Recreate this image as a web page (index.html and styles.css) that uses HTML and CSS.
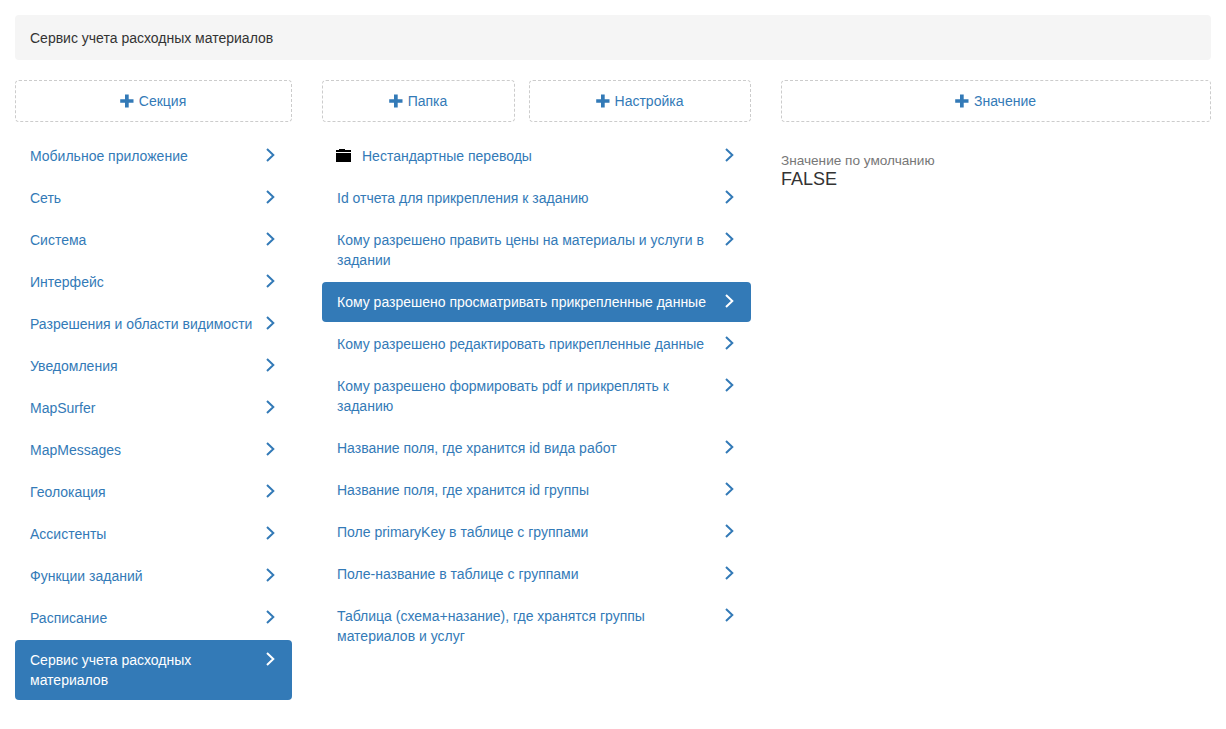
FILE: index.html
```html
<!DOCTYPE html>
<html lang="ru">
<head>
<meta charset="utf-8">
<title>Сервис учета расходных материалов</title>
<link rel="stylesheet" href="styles.css">
</head>
<body>
<svg class="defs" width="0" height="0" aria-hidden="true">
  <symbol id="plus" viewBox="0 0 14 14"><path d="M5 .5h3.700v4.700h4.800v3.600H8.700v4.700H5V8.800H.2V5.200H5z"/></symbol>
  <symbol id="chev" viewBox="0 0 9 14"><path d="M1 1l6.300 6L1 13" fill="none" stroke="currentColor" stroke-width="2"/></symbol>
</svg>
<div class="crumb">Сервис учета расходных материалов</div>
<main class="cols">
  <section>
    <div class="actions">
      <a class="add"><svg class="plus"><use href="#plus"/></svg>Секция</a>
    </div>
    <ul class="list">
      <li class="item"><span class="label">Мобильное приложение</span><svg class="chev"><use href="#chev"/></svg></li>
      <li class="item"><span class="label">Сеть</span><svg class="chev"><use href="#chev"/></svg></li>
      <li class="item"><span class="label">Система</span><svg class="chev"><use href="#chev"/></svg></li>
      <li class="item"><span class="label">Интерфейс</span><svg class="chev"><use href="#chev"/></svg></li>
      <li class="item"><span class="label">Разрешения и области видимости</span><svg class="chev"><use href="#chev"/></svg></li>
      <li class="item"><span class="label">Уведомления</span><svg class="chev"><use href="#chev"/></svg></li>
      <li class="item"><span class="label">MapSurfer</span><svg class="chev"><use href="#chev"/></svg></li>
      <li class="item"><span class="label">MapMessages</span><svg class="chev"><use href="#chev"/></svg></li>
      <li class="item"><span class="label">Геолокация</span><svg class="chev"><use href="#chev"/></svg></li>
      <li class="item"><span class="label">Ассистенты</span><svg class="chev"><use href="#chev"/></svg></li>
      <li class="item"><span class="label">Функции заданий</span><svg class="chev"><use href="#chev"/></svg></li>
      <li class="item"><span class="label">Расписание</span><svg class="chev"><use href="#chev"/></svg></li>
      <li class="item active"><span class="label">Сервис учета расходных материалов</span><svg class="chev"><use href="#chev"/></svg></li>
    </ul>
  </section>
  <section>
    <div class="actions actions-two">
      <a class="add"><svg class="plus"><use href="#plus"/></svg>Папка</a>
      <a class="add"><svg class="plus"><use href="#plus"/></svg>Настройка</a>
    </div>
    <ul class="list">
      <li class="item"><svg class="folder" viewBox="0 0 15 13"><path d="M3 0h6v1h6v2H0V1h3zM0 4h15v9H0z"/></svg><span class="label">Нестандартные переводы</span><svg class="chev"><use href="#chev"/></svg></li>
      <li class="item"><span class="label">Id отчета для прикрепления к заданию</span><svg class="chev"><use href="#chev"/></svg></li>
      <li class="item"><span class="label">Кому разрешено править цены на материалы и услуги в задании</span><svg class="chev"><use href="#chev"/></svg></li>
      <li class="item active"><span class="label">Кому разрешено просматривать прикрепленные данные</span><svg class="chev"><use href="#chev"/></svg></li>
      <li class="item"><span class="label">Кому разрешено редактировать прикрепленные данные</span><svg class="chev"><use href="#chev"/></svg></li>
      <li class="item"><span class="label">Кому разрешено формировать pdf и прикреплять к заданию</span><svg class="chev"><use href="#chev"/></svg></li>
      <li class="item"><span class="label">Название поля, где хранится id вида работ</span><svg class="chev"><use href="#chev"/></svg></li>
      <li class="item"><span class="label">Название поля, где хранится id группы</span><svg class="chev"><use href="#chev"/></svg></li>
      <li class="item"><span class="label">Поле primaryKey в таблице с группами</span><svg class="chev"><use href="#chev"/></svg></li>
      <li class="item"><span class="label">Поле-название в таблице с группами</span><svg class="chev"><use href="#chev"/></svg></li>
      <li class="item"><span class="label">Таблица (схема+назание), где хранятся группы материалов и услуг</span><svg class="chev"><use href="#chev"/></svg></li>
    </ul>
  </section>
  <section>
    <div class="actions">
      <a class="add"><svg class="plus"><use href="#plus"/></svg>Значение</a>
    </div>
    <div class="value">
      <div class="value-label">Значение по умолчанию</div>
      <div class="value-text">FALSE</div>
    </div>
  </section>
</main>
</body>
</html>
```
FILE: styles.css
```css
* { box-sizing: border-box; }
html, body { margin: 0; background: #fff; }
body {
  padding: 15px;
  font: 14px/20px "Liberation Sans", Arial, sans-serif;
  color: #333;
}
.defs { position: absolute; }
.crumb {
  height: 45px;
  padding: 13px 15px 12px;
  background: #f5f5f5;
  border-radius: 4px;
  margin-bottom: 20px;
}
.cols {
  display: grid;
  grid-template-columns: 277px 429px 430px;
  gap: 30px;
}
.actions { display: grid; margin-bottom: 14px; }
.actions-two { grid-template-columns: 193px 222px; gap: 14px; }
.add {
  display: flex;
  align-items: center;
  justify-content: center;
  height: 42px;
  border: 1px dashed #ccc;
  border-radius: 4px;
  color: #337ab7;
}
.plus { width: 14px; height: 14px; margin: 0 5px 0 -1px; fill: #337ab7; }
.list { list-style: none; margin: 0; padding: 0; display: flex; flex-direction: column; gap: 2px; }
.item {
  display: flex;
  align-items: flex-start;
  padding: 10px 17px 10px 15px;
  border-radius: 4px;
  color: #337ab7;
}
.item.active { background: #337ab7; color: #fff; }
.label { flex: 1; padding-right: 4px; }
.chev { flex: none; width: 9px; height: 14px; margin-top: 2px; }
.folder { flex: none; width: 15px; height: 13px; margin: 3px 11px 0 -1px; fill: #000; }
.value { margin-top: 29px; }
.value-label { color: #777; font-size: 13.6px; line-height: 19px; }
.value-text { font-size: 18px; line-height: 19px; }
```
